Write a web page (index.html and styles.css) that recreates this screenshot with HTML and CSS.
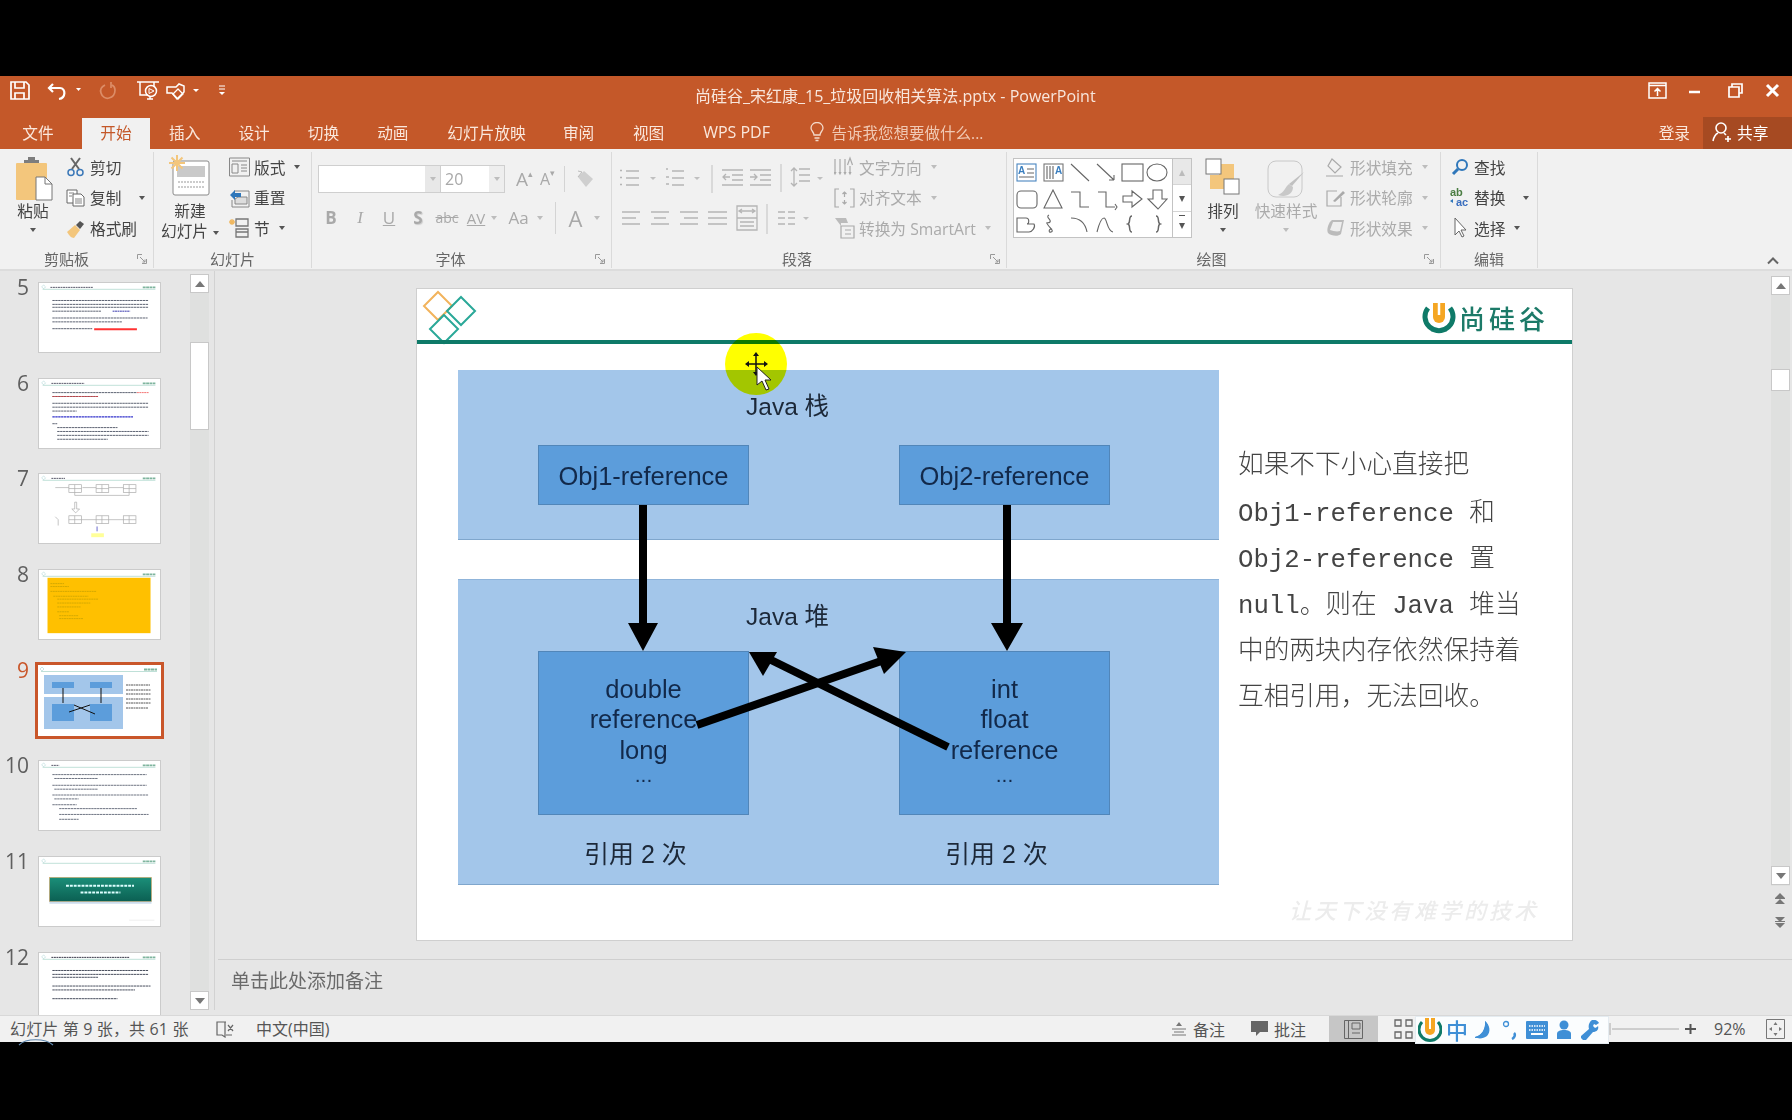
FILE: index.html
```html
<!DOCTYPE html>
<html lang="zh-CN">
<head>
<meta charset="utf-8">
<title>PowerPoint</title>
<link rel="stylesheet" href="styles.css">
</head>
<body>
<svg class="defs" width="0" height="0" aria-hidden="true">
  <symbol id="th-head" viewBox="0 0 123 71">
    <path d="M3 6.5H119" stroke="#bfe0d8" stroke-width="1"/>
    <path d="M4 2l2 2-2 2-2-2z" fill="none" stroke="#9cc" stroke-width=".5"/>
    <path d="M106 4.500H119" stroke="#7fb59e" stroke-width="2" stroke-dasharray="3 .5"/>
  </symbol>
  <symbol id="launcher" viewBox="0 0 10 10">
    <path d="M.5 5V.5H5M9.500 5V9.500H5M3 3l5 5M8 5.500V8H5.500" fill="none" stroke="#999" stroke-width="1"/>
  </symbol>
</svg>
<div class="bar-black-top"></div>
<div class="app">
  <header class="titlebar">
    <div class="qat">
      <svg width="232" height="30" viewBox="0 0 232 30" fill="none" stroke="#fff" stroke-width="1.700">
        <path d="M11 6h15l3 3v14H11zM15 6v6h9V6M15 23v-6h9v6"/>
        <path d="M53 8l-4 4 4 4M49 12h11c6 0 6 10-1 11" stroke-width="2.200"/>
        <path d="M76 12h5l-2.500 3z" fill="#fff" stroke="none"/>
        <path d="M105 9c-4 2-5 5-4 8 1 4 5 6 8 5 4-1 6-4 6-8 0-2-1-4-3-5M111 6v6" stroke="#dc8d67"/>
        <path d="M137 6h22M140 6v13h8M154 6v5M147 23h6M150 20v3" stroke-width="1.500"/>
        <circle cx="151" cy="15" r="5.500" stroke-width="1.500"/><path d="M149 12.500l5 2.500-5 2.500z" stroke-width="1"/>
        <path d="M167 11h9l3-3 5 2v6l-7 7-5-6h-5z" stroke-width="1.500"/><path d="M178 13l5 5-5 5-5-5z" stroke-width="1.300"/>
        <path d="M193 13h6l-3 3z" fill="#fff" stroke="none"/>
        <path d="M219 10h6M219 13h6" stroke-width="1"/><path d="M219 16h6l-3 3z" fill="#fff" stroke="none"/>
      </svg>
    </div>
    <div class="doc-title">尚硅谷_宋红康_15_垃圾回收相关算法.pptx - PowerPoint</div>
    <div class="winctl">
      <svg width="150" height="30" viewBox="0 0 150 30" fill="none" stroke="#fff" stroke-width="1.500">
        <path d="M7 7h17v15H7zM7 9.500h17M15.500 20v-7M12.500 15.500l3-3 3 3"/>
        <path d="M47 16h11" stroke-width="2.500"/>
        <path d="M87 11h10v10H87zM90 11V8h10v9h-3" stroke-width="1.700"/>
        <path d="M125 9l11 11M136 9l-11 11" stroke-width="3"/>
      </svg>
    </div>
  </header>
  <nav class="tabs">
    <span class="tab t-file">文件</span>
    <span class="tab t-home">开始</span>
    <span class="tab t-std">插入</span>
    <span class="tab t-std">设计</span>
    <span class="tab t-std">切换</span>
    <span class="tab t-std">动画</span>
    <span class="tab t-show">幻灯片放映</span>
    <span class="tab t-rev">审阅</span>
    <span class="tab t-view">视图</span>
    <span class="tab t-pdf">WPS PDF</span>
    <span class="tell">
      <svg width="14" height="20" viewBox="0 0 14 20" fill="none" stroke="#f3d9c9" stroke-width="1.300"><path d="M4 13c0-3-3-4-3-7a6 5.500 0 0 1 12 0c0 3-3 4-3 7zM4.500 16h5M5.500 18.500h3"/></svg>
      <span>告诉我您想要做什么...</span>
    </span>
    <span class="login">登录</span>
    <span class="share">
      <svg width="20" height="22" viewBox="0 0 20 22" fill="none" stroke="#fff" stroke-width="1.600"><circle cx="9" cy="7" r="5"/><path d="M1 20c1-5 3-7 5-8M12 12l2 2M13 18h6M16 15v6"/></svg>
      <span>共享</span>
    </span>
  </nav>
  <section class="ribbon">
    <div class="group g-clip">
      <div class="group-body">
        <div class="big b-paste">
          <svg class="big-icon" width="40" height="49" viewBox="0 0 40 49">
            <rect x="3" y="11" width="31" height="37" rx="1" fill="#f3c67c"/>
            <path d="M11 11V8h4V5h7v3h4v3z" fill="#7d7d7d"/>
            <path d="M23 25h9l7 7v16H23z" fill="#fff" stroke="#777"/>
            <path d="M32 25v7h7" fill="none" stroke="#777"/>
          </svg>
          <span class="big-text">粘贴</span>
          <i class="caret caret-big"></i>
        </div>
        <div class="col c-clip">
          <div class="sbtn">
            <svg class="ic" width="20" height="20" viewBox="0 0 20 20" fill="none" stroke="#666" stroke-width="1.500"><path d="M5 1l8 11M14 1L6 12" stroke-width="2"/><circle cx="5" cy="15.500" r="3" stroke="#3b78b8"/><circle cx="14" cy="15.500" r="3" stroke="#3b78b8"/></svg>
            <span>剪切</span>
          </div>
          <div class="sbtn">
            <svg class="ic" width="20" height="20" viewBox="0 0 20 20" fill="#fff" stroke="#666"><path d="M1 2h10v13H1z"/><path d="M7 6h8l3 3v9H7z"/><path d="M3 5h5M3 8h3M9 11h7M9 13h7M9 15h7" stroke-width=".800"/></svg>
            <span>复制</span><i class="caret c-copy"></i>
          </div>
          <div class="sbtn">
            <svg class="ic" width="20" height="20" viewBox="0 0 20 20"><path d="M1 14l8-7 5 5-6 8c-3 0-5-3-7-6z" fill="#f3c67c"/><path d="M10 7l4-4 4 3-4 5z" fill="#555"/></svg>
            <span>格式刷</span>
          </div>
        </div>
      </div>
      <div class="group-label l-clip">剪贴板<svg class="launch" width="10" height="10"><use href="#launcher"/></svg></div>
    </div>

    <div class="group g-slides">
      <div class="group-body">
        <div class="big b-new">
          <svg class="big-icon" width="42" height="49" viewBox="0 0 42 49">
            <rect x="4" y="9" width="36" height="34" rx="2" fill="#fff" stroke="#8a8a8a"/>
            <rect x="8" y="14" width="28" height="11" fill="#c9c9c9"/>
            <path d="M9 30h26M9 35h26" stroke="#999" stroke-dasharray="2 1"/>
            <path d="M8 3v16M0 11h16M2.500 5.500l11 11M13.500 5.500l-11 11" stroke="#f3c67c" stroke-width="2"/>
          </svg>
          <span class="big-text">新建</span>
          <span class="big-text">幻灯片<i class="caret c-inline"></i></span>
        </div>
        <div class="col c-slides">
          <div class="sbtn">
            <svg class="ic" width="21" height="20" viewBox="0 0 21 20" fill="none" stroke="#888"><path d="M.5 1h20v18H.5zM3 4h15M3 7h6v9H3zM12 8h6M12 11h6M12 14h6"/></svg>
            <span>版式</span><i class="caret c-near"></i>
          </div>
          <div class="sbtn">
            <svg class="ic" width="21" height="20" viewBox="0 0 21 20" fill="none" stroke="#888"><path d="M5 3h15v16H3V12"/><path d="M9 9h9v7H6v-5z" fill="#ddd"/><path d="M1 7l5-5v3h6v4H6v3z" fill="#2f77ba" stroke="none"/></svg>
            <span>重置</span>
          </div>
          <div class="sbtn">
            <svg class="ic" width="21" height="20" viewBox="0 0 21 20" fill="none" stroke="#777" stroke-width="1.300"><path d="M7 1h12v7H7zM7 11h12v8H7zM7 14h12"/><path d="M3 1v6M0 4h6M1 2l4 4M5 2L1 6" stroke="#f0b860"/></svg>
            <span>节</span><i class="caret c-near"></i>
          </div>
        </div>
      </div>
      <div class="group-label">幻灯片</div>
    </div>

    <div class="group g-font">
      <div class="group-body font-body">
        <div class="font-row">
          <div class="combo cb-name"><span class="cb-arrow"><i class="caret caret-dis"></i></span></div>
          <div class="combo cb-size"><span class="cb-value">20</span><span class="cb-arrow cb-arrow-s"><i class="caret caret-dis"></i></span></div>
          <span class="ftool ft-a1">A<sup>▴</sup></span>
          <span class="ftool ft-a2">A<sup>▾</sup></span>
          <span class="vsep vs-f1"></span>
          <svg class="eraser" width="20" height="20" viewBox="0 0 20 20"><path d="M3 8l6-6 9 8-7 8z" fill="#cfcfcf"/><path d="M3 2l4 1-4 5" fill="none" stroke="#bbb"/></svg>
        </div>
        <div class="font-row font-row2">
          <span class="fcell fb">B</span>
          <span class="fcell fi">I</span>
          <span class="fcell fu">U</span>
          <span class="fcell fs">S</span>
          <span class="fcell fabc">abc</span>
          <span class="fcell fav">AV</span>
          <i class="caret caret-dis c-av"></i>
          <span class="fcell faa">Aa</span>
          <i class="caret caret-dis c-aa"></i>
          <span class="vsep vs-f2"></span>
          <span class="fcell fa">A</span>
          <i class="caret caret-dis c-a"></i>
        </div>
      </div>
      <div class="group-label l-font">字体<svg class="launch" width="10" height="10"><use href="#launcher"/></svg></div>
    </div>

    <div class="group g-para">
      <div class="group-body">
        <div class="para-icons">
          <svg width="220" height="93" viewBox="0 0 220 93" fill="none" stroke="#b5b5b5" stroke-width="1.300">
            <path d="M14 19h13M14 26h13M14 33h13M8 18.500h2M8 25.500h2M8 32.500h2" />
            <path d="M38 25h6l-3 3z" fill="#c0c0c0" stroke="none"/>
            <path d="M60 19h12M60 26h12M60 33h12M54 17h2M54 25h3M54 32h3"/>
            <path d="M82 25h6l-3 3z" fill="#c0c0c0" stroke="none"/>
            <path d="M100 13v28M169 13" stroke="#ccc"/>
            <path d="M110 18h21M120 23h11M120 28h11M110 33h21M111 25h7M114 22l-3 3 3 3"/>
            <path d="M138 18h21M148 23h11M148 28h11M138 33h21M138 25h7M142 22l3 3-3 3"/>
            <path d="M169 12v28" stroke="#ccc"/>
            <path d="M187 17h11M187 23h11M187 29h11M182 16v18M179 19l3-3 3 3M179 31l3 3 3-3"/>
            <path d="M205 25h6l-3 3z" fill="#c0c0c0" stroke="none"/>
            <path d="M10 60h18M10 66h14M10 72h18M39 60h18M42 66h12M39 72h18M68 60h18M72 66h14M68 72h18M96 60h19M96 66h19M96 72h19"/>
            <path d="M125 54h20v24h-20zM125 66h20M128 59h14M130 57l-3 2 3 2M140 57l3 2-3 2M128 70h14M128 74h14"/>
            <path d="M155 52v30" stroke="#ccc"/>
            <path d="M166 60h7M166 66h7M166 72h7M176 60h7M176 66h7M176 72h7"/>
            <path d="M191 65h6l-3 3z" fill="#c0c0c0" stroke="none"/>
          </svg>
        </div>
        <div class="col c-para">
          <div class="sbtn dis">
            <svg class="ic" width="21" height="22" viewBox="0 0 21 22" fill="none" stroke="#aaa" stroke-width="1.200"><path d="M1 3v15M6 3v15M11 3v15M16 10v8M0 16l1 2 1-2M5 16l1 2 1-2M10 16l1 2 1-2M15 16l1 2 1-2M13.500 9l2.500-7 2.500 7"/></svg>
            <span>文字方向</span><i class="caret caret-dis c-near"></i>
          </div>
          <div class="sbtn dis">
            <svg class="ic" width="21" height="22" viewBox="0 0 21 22" fill="none" stroke="#aaa" stroke-width="1.200"><path d="M5 2H1v18h4M16 2h4v18h-4M10.500 5v5M8.500 7l2-2 2 2M10.500 17v-4M8.500 15l2 2 2-2"/></svg>
            <span>对齐文本</span><i class="caret caret-dis c-near"></i>
          </div>
          <div class="sbtn dis">
            <svg class="ic" width="21" height="22" viewBox="0 0 21 22" fill="none" stroke="#aaa" stroke-width="1.200"><path d="M7 9h13v12H7zM11 13h6M11 17h6"/><path d="M1 1h11l2 5H7v3z" fill="#bbb" stroke="none"/></svg>
            <span>转换为 SmartArt</span><i class="caret caret-dis c-near"></i>
          </div>
        </div>
      </div>
      <div class="group-label l-para">段落<svg class="launch" width="10" height="10"><use href="#launcher"/></svg></div>
    </div>

    <div class="group g-draw">
      <div class="group-body">
        <div class="gallery">
          <svg width="160" height="80" viewBox="0 0 160 80" fill="none" stroke="#666" stroke-width="1.100">
            <rect x="4" y="6" width="19" height="17" stroke="#4a86c0"/><text x="5" y="16" class="ga">A</text><path d="M14 11h7M14 15h7M6 19h15"/>
            <rect x="31" y="6" width="19" height="17" stroke="#777"/><path d="M34 8v13M37 8v13M40 8v13"/><text x="42" y="16" class="ga">A</text>
            <path d="M58 6l18 17M84 6l17 16M101 22v-5M101 22h-5"/>
            <rect x="109" y="6" width="21" height="17"/>
            <ellipse cx="144" cy="14.500" rx="10" ry="8.500"/>
            <rect x="4" y="33" width="20" height="17" rx="4"/>
            <path d="M40 32l9 18H31zM58 34h9v15h9M85 34h8v15h9M102 46l2 3-2 3"/>
            <path d="M110 38h9v-5l10 8-10 8v-5h-9zM140 32h9v9h5l-9 10-10-10h5z"/>
            <path d="M4 74V60h9c4 0 3 6 1 6h7c2 3-2 8-5 8z"/>
            <path d="M36 57c-4 2 3 5 1 7s-5-1-2 3 6 6 3 7-2-4 1-3" />
            <path d="M58 60c9 0 14 4 16 14M84 74c2-8 4-14 7-14s3 13 9 14"/>
            <path d="M119 58c-4 0-1 7-4 8 3 1 0 8 4 8M143 58c4 0 1 7 4 8-3 1 0 8-4 8" stroke-width="1.500"/>
          </svg>
        </div>
        <div class="gal-scroll">
          <span class="gs gs-up">▴</span>
          <span class="gs gs-mid">▾</span>
          <span class="gs gs-more">▾</span>
        </div>
        <div class="big b-arr">
          <svg class="big-icon" width="38" height="49" viewBox="0 0 38 49">
            <rect x="15" y="12" width="15" height="15" fill="#f3c67c"/>
            <rect x="6" y="23" width="14" height="14" fill="#f3c67c"/>
            <rect x="2" y="7" width="15" height="15" fill="#fff" stroke="#777"/>
            <rect x="20" y="27" width="15" height="15" fill="#fff" stroke="#777"/>
          </svg>
          <span class="big-text">排列</span>
          <i class="caret caret-big"></i>
        </div>
        <div class="big b-quick dis">
          <svg class="big-icon" width="40" height="49" viewBox="0 0 40 49">
            <rect x="2" y="9" width="34" height="36" rx="8" fill="#f1f1f1" stroke="#c8c8c8"/>
            <path d="M38 20L26 34l-3-2z" fill="#c0c0c0"/><path d="M23 32c-4 3-4 8-11 11 8 3 15-1 15-8z" fill="#c8c8c8"/>
          </svg>
          <span class="big-text">快速样式</span>
          <i class="caret caret-dis caret-big"></i>
        </div>
        <div class="col c-shape">
          <div class="sbtn dis">
            <svg class="ic" width="20" height="20" viewBox="0 0 20 20" fill="none" stroke="#aaa" stroke-width="1.200"><path d="M6 2l9 8-6 6-7-7z"/><path d="M0 19h17" stroke="#ccc" stroke-width="2"/></svg>
            <span>形状填充</span><i class="caret caret-dis c-near"></i>
          </div>
          <div class="sbtn dis">
            <svg class="ic" width="20" height="20" viewBox="0 0 20 20" fill="none" stroke="#aaa" stroke-width="1.200"><path d="M11 3H1v15h14V9"/><path d="M7 13l10-10 2 2-10 9z" fill="#aaa" stroke="none"/></svg>
            <span>形状轮廓</span><i class="caret caret-dis c-near"></i>
          </div>
          <div class="sbtn dis">
            <svg class="ic" width="20" height="20" viewBox="0 0 20 20"><path d="M6 2h12l-3 14c-3 3-10 2-13-1-2-4 1-11 4-13z" fill="#bbb"/><path d="M7 4h9l-2 9c-3 1-7 0-10-1z" fill="#eee"/></svg>
            <span>形状效果</span><i class="caret caret-dis c-near"></i>
          </div>
        </div>
      </div>
      <div class="group-label l-draw">绘图<svg class="launch" width="10" height="10"><use href="#launcher"/></svg></div>
    </div>

    <div class="group g-edit">
      <div class="group-body">
        <div class="col c-edit">
          <div class="sbtn">
            <svg class="ic" width="20" height="20" viewBox="0 0 20 20" fill="none" stroke="#2f77ba" stroke-width="2"><circle cx="12" cy="8" r="5"/><path d="M8 12l-5 5" stroke-width="3"/></svg>
            <span>查找</span>
          </div>
          <div class="sbtn">
            <svg class="ic" width="20" height="24" viewBox="0 0 20 24"><text x="0" y="10" class="rep rep-a">ab</text><text x="6" y="20" class="rep rep-b">ac</text><path d="M0 15l3-2v4zM3 15h2" fill="#2f77ba"/></svg>
            <span>替换</span><i class="caret c-rep"></i>
          </div>
          <div class="sbtn">
            <svg class="ic" width="20" height="22" viewBox="0 0 20 22" fill="#fff" stroke="#666"><path d="M5 1v17l4-4 3 6 2-1-3-6h5z"/></svg>
            <span>选择</span><i class="caret c-near"></i>
          </div>
        </div>
      </div>
      <div class="group-label">编辑</div>
    </div>

    <div class="ribbon-rest">
      <svg width="14" height="9" viewBox="0 0 14 9" fill="none" stroke="#666" stroke-width="2"><path d="M2 7.500l5-5 5 5"/></svg>
    </div>
  </section>

  <main class="main">
    <aside class="sidebar">
      <div class="thumbs">
        <div class="thumb-item"><span class="num">5</span><div class="thumb">
          <svg viewBox="0 0 123 71"><use href="#th-head"/><path d="M11 4.500H55" stroke="#556" stroke-dasharray="2 .6"/>
          <g stroke="#5a6070" stroke-width="1" stroke-dasharray="2.500 .5"><path d="M13 18H112M13 22H112M13 25H112M13 29H63M13 36H111M13 40H85M13 47H54"/></g>
          <path d="M75 29H93" stroke="#33a" stroke-dasharray="2 .5"/><path d="M56 47.500H100" stroke="#f33" stroke-width="2"/></svg></div></div>
        <div class="thumb-item"><span class="num">6</span><div class="thumb">
          <svg viewBox="0 0 123 71"><use href="#th-head"/><path d="M12 4.500H46" stroke="#556" stroke-dasharray="2 .6"/>
          <g stroke="#5a6070" stroke-width="1" stroke-dasharray="2.500 .5"><path d="M13 14H100M13 18H60M13 25H112M13 29H112M13 33H38M13 46H18M18 50H80M18 54H112M18 58H112M18 62H70"/></g>
          <path d="M100 14H112M13 18H60" stroke="#e33" stroke-dasharray="2 .5" opacity=".7"/><path d="M13 39H96" stroke="#33c" stroke-width="1.300" stroke-dasharray="2.500 .5"/></svg></div></div>
        <div class="thumb-item"><span class="num">7</span><div class="thumb">
          <svg viewBox="0 0 123 71"><use href="#th-head"/><path d="M12 4.500H26" stroke="#556" stroke-dasharray="2 .6"/>
          <g fill="none" stroke="#aaa" stroke-width=".700"><path d="M16 14H30M44 14H58M71 14H86"/><rect x="30" y="11" width="13" height="8"/><rect x="58" y="11" width="13" height="8"/><rect x="86" y="11" width="13" height="8"/><path d="M36 11v8M64 11v8M92 11v8M30 15h13M58 15h13M86 15h13M92 19v3H36v-3"/><path d="M36 29v7h-3l4 4 4-4h-3v-7z"/><rect x="30" y="43" width="13" height="8"/><rect x="58" y="43" width="13" height="8"/><rect x="86" y="43" width="13" height="8"/><path d="M36 43v8M64 43v8M92 43v8M30 47h13M58 47h13M86 47h13M43 47h15M71 47h15M16 44l3 3v6"/></g>
          <rect x="53" y="61" width="13" height="4" fill="#ffff99"/><path d="M59 54v5" stroke="#66c"/></svg></div></div>
        <div class="thumb-item"><span class="num">8</span><div class="thumb">
          <svg viewBox="0 0 123 71"><use href="#th-head"/><rect x="8" y="8" width="106" height="57" fill="#ffc000"/>
          <g stroke="#c7a200" stroke-width=".800" stroke-dasharray="2 .5"><path d="M11 14H25M11 17H30M11 22H58M14 27H50M18 30H60M18 34H52M18 38H42M18 43H30M20 47H40M20 50H45"/></g></svg></div></div>
        <div class="thumb-item"><span class="num num-on">9</span><div class="thumb thumb-on">
          <svg viewBox="0 0 123 71"><use href="#th-head"/><rect x="6" y="10" width="79" height="19" fill="#a3c6ea"/><rect x="6" y="32" width="79" height="32" fill="#a3c6ea"/>
          <rect x="14" y="17" width="22" height="6" fill="#5c9ddb"/><rect x="52" y="17" width="22" height="6" fill="#5c9ddb"/><rect x="14" y="39" width="22" height="17" fill="#5c9ddb"/><rect x="52" y="39" width="22" height="17" fill="#5c9ddb"/>
          <path d="M25 23V38M63 23V38M31 47L52 40M57 49L36 40" stroke="#111" stroke-width="1"/>
          <g stroke="#444" stroke-width=".900" stroke-dasharray="2 .5"><path d="M88 20H112M88 25H113M88 29H113M88 34H113M88 38H113M88 43H110"/></g></svg></div></div>
        <div class="thumb-item"><span class="num">10</span><div class="thumb">
          <svg viewBox="0 0 123 71"><use href="#th-head"/><path d="M12 4.500H20" stroke="#556" stroke-dasharray="2 .6"/>
          <g stroke="#5a6070" stroke-width=".900" stroke-dasharray="2.500 .5"><path d="M13 14H110M15 18H60M13 25H110M15 29H60M13 35H112M15 39H40M13 45H38M20 49H100M20 55H112M20 60H40"/></g></svg></div></div>
        <div class="thumb-item"><span class="num">11</span><div class="thumb">
          <svg viewBox="0 0 123 71"><defs><linearGradient id="tg" x1="0" y1="0" x2="0" y2="1"><stop offset="0" stop-color="#1b8f79"/><stop offset="1" stop-color="#0b5f52"/></linearGradient></defs><use href="#th-head"/><rect x="10" y="21" width="105" height="25" fill="url(#tg)" stroke="#e8a050" stroke-width=".500"/>
          <path d="M27 29.500H97M42 36.500H83" stroke="#dff" stroke-width="2" stroke-dasharray="3 1"/><path d="M10 47H115" stroke="#cde" stroke-width="2"/><path d="M92 65H118" stroke="#eee"/></svg></div></div>
        <div class="thumb-item"><span class="num">12</span><div class="thumb">
          <svg viewBox="0 0 123 71"><use href="#th-head"/><path d="M12 4.500H92" stroke="#334" stroke-dasharray="2 .6"/>
          <g stroke="#444a5a" stroke-width="1" stroke-dasharray="2.500 .5"><path d="M13 18H112M13 22H112M13 25H60M13 34H114M13 38H98M13 47H80"/></g></svg></div></div>
      </div>
      <div class="vscroll vs-left">
        <span class="sb-btn"><i class="tri-up"></i></span>
        <span class="sb-thumb"></span>
        <span class="sb-btn sb-end"><i class="tri-down"></i></span>
      </div>
    </aside>

    <div class="editor">
      <div class="editor-top">
        <div class="canvas">
          <div class="slide">
            <svg class="sl-diamonds" width="60" height="56" viewBox="0 0 60 56" fill="none" stroke-width="2">
              <path d="M21 2l14 14-14 14L7 16z" stroke="#f2b35c"/>
              <path d="M44 7l14 14-14 14-14-14z" stroke="#2aa898"/>
              <path d="M27 25l14 14-14 14-14-14z" stroke="#2aa898"/>
            </svg>
            <div class="sl-logo">
              <svg width="34" height="32" viewBox="0 0 34 32">
                <path d="M6 6a14 14 0 1 0 22 0" fill="none" stroke="#0f7a68" stroke-width="5"/>
                <path d="M11 1h12v14a6 6 0 0 1-12 0z" fill="#f5a623"/>
                <path d="M17 0v13" stroke="#fff" stroke-width="2.500"/>
              </svg>
              <span class="sl-logo-text">尚硅谷</span>
            </div>
            <div class="sl-rule"></div>
            <div class="sl-area sl-stack"><span class="sl-head">Java 栈</span></div>
            <div class="sl-area sl-heap"><span class="sl-head sl-head-h">Java 堆</span></div>
            <div class="sl-box sl-ref1">Obj1-reference</div>
            <div class="sl-box sl-ref2">Obj2-reference</div>
            <div class="sl-box sl-obj1">double<br>reference<br>long<span class="sl-dots">...</span></div>
            <div class="sl-box sl-obj2">int<br>float<br>reference<span class="sl-dots">...</span></div>
            <span class="sl-count sl-c1">引用 2 次</span>
            <span class="sl-count sl-c2">引用 2 次</span>
            <svg class="sl-arrows" width="1155" height="651" viewBox="0 0 1155 651">
              <g fill="#000" stroke="none">
                <path d="M222 216h8v118h11l-15 28-15-28h11z"/>
                <path d="M586 216h8v118h12l-16 28-16-28h12z"/>
              </g>
              <path d="M280 436L470 370" stroke="#000" stroke-width="8" fill="none"/>
              <path d="M489 363l-33-5 11 27z" fill="#000"/>
              <path d="M531 458L352 370" stroke="#000" stroke-width="8" fill="none" />
              <path d="M332 363h28l-14 24z" fill="#000"/>
            </svg>
            <div class="sl-text">
              <div class="sl-first">如果不下小心直接把</div>
              <div>Obj1-reference 和</div>
              <div>Obj2-reference 置</div>
              <div>null。则在 Java 堆当</div>
              <div>中的两块内存依然保持着</div>
              <div>互相引用，无法回收。</div>
            </div>
            <div class="sl-mark">让天下没有难学的技术</div>
            <div class="cursor-spot"></div>
            <svg class="cursor" width="30" height="42" viewBox="0 0 30 42">
              <path d="M10 12V3M10 12V21M10 12H1M10 12H20" stroke="#111" stroke-width="1.500"/>
              <path d="M10 0l-3 4h6zM10 24l-3-4h6zM-1 12l4-3v6zM22 12l-4-3v6z" fill="#111"/>
              <path d="M11 15v18l5-4 4 9 3-1-4-9h6z" fill="#fff" stroke="#222" stroke-width="1"/>
            </svg>
          </div>
        </div>
        <div class="vscroll vs-right">
          <span class="sb-btn"><i class="tri-up"></i></span>
          <span class="sb-thumb sb-thumb-r"></span>
          <span class="sb-btn sb-end-r"><i class="tri-down"></i></span>
          <svg class="sb-page" width="14" height="36" viewBox="0 0 14 36" fill="#777"><path d="M7 0l5 5H2zM7 6l5 5H2z"/><path d="M2 5.500h10M2 28.500h10" stroke="#777"/><path d="M7 29l5-5H2zM7 35l5-5H2z"/></svg>
        </div>
      </div>
      <div class="notes">单击此处添加备注</div>
    </div>
  </main>

  <footer class="status">
    <svg class="status-arc" width="36" height="8" viewBox="0 0 36 8" fill="none" stroke="#5d86ad" stroke-width="1.200"><path d="M1 7C8 0 27 0 35 7"/></svg>
    <span class="st-count">幻灯片 第 9 张，共 61 张</span>
    <svg class="st-spell" width="19" height="18" viewBox="0 0 19 18" fill="none" stroke="#666" stroke-width="1.200"><path d="M10 2H2v13h5l3 2V2zM10 2h1M13 5l5 6M18 5l-5 6M11 15h6"/></svg>
    <span class="st-lang">中文(中国)</span>
    <div class="st-right">
      <span class="st-btn st-notes">
        <svg width="16" height="17" viewBox="0 0 16 17" fill="none" stroke="#777"><path d="M1 9h14M3 12h10M1 15h14"/><path d="M5 6l3-4 3 4z" fill="#777" stroke="none"/></svg>
        备注
      </span>
      <span class="st-btn st-comments">
        <svg width="17" height="17" viewBox="0 0 17 17"><path d="M0 1h17v11H9l-4 4v-4H0z" fill="#666"/></svg>
        批注
      </span>
      <span class="st-view">
        <svg width="19" height="19" viewBox="0 0 19 19" fill="none" stroke="#666"><path d="M.5.5h18v18H.5zM4.500.5v18M8 3h8v6H8zM8 13h8"/></svg>
      </span>
      <span class="st-grid">
        <svg width="19" height="20" viewBox="0 0 19 20" fill="none" stroke="#666" stroke-width="1.300"><path d="M1 1h6v6H1zM12 1h6v6h-6zM1 13h6v6H1zM12 13h6v6h-6z"/></svg>
      </span>
      <span class="st-zoom-gap"></span>
      <svg class="st-slider" width="88" height="16" viewBox="0 0 88 16" fill="none" stroke="#777"><path d="M1 2v12M3 8H70" stroke="#aaa"/><path d="M76 8h11M81.500 3v10" stroke="#555" stroke-width="2"/></svg>
      <span class="st-pct">92%</span>
      <svg class="st-fit" width="19" height="20" viewBox="0 0 19 20" fill="none" stroke="#777"><path d="M.5.5h18v19H.5z"/><path d="M9.500 3l-2 3h4zM9.500 17l-2-3h4zM3 10l3-2v4zM16 10l-3-2v4z" fill="#777" stroke="none"/></svg>
    </div>
    <div class="ime">
      <svg width="24" height="26" viewBox="0 0 24 26">
        <path d="M4 5a11 11 0 1 0 16 0" fill="none" stroke="#0f7a68" stroke-width="3"/>
        <path d="M7 1h10v12a5 5 0 0 1-10 0z" fill="#f5a623"/>
        <path d="M12 0v12" stroke="#fff" stroke-width="2"/>
      </svg>
      <span class="ime-zh">中</span>
      <svg width="18" height="18" viewBox="0 0 18 18"><path d="M10 0c6 5 5 17-9 17-1 0-1 0-1-1 6-1 11-8 10-16z" fill="#3f8fd6"/><path d="M10 0c5 4 6 11 2 15-4 3-9 3-12 1 7-1 11-8 10-16z" fill="#3f8fd6"/></svg>
      <svg width="16" height="20" viewBox="0 0 16 20" fill="none" stroke="#3f8fd6" stroke-width="1.300"><circle cx="4" cy="4" r="2.500"/><path d="M12 13c2 2 0 5-2 6" stroke-width="2.500"/></svg>
      <svg width="22" height="18" viewBox="0 0 22 18"><rect width="22" height="18" rx="1" fill="#3f8fd6"/><path d="M3 5h16M3 9h16" stroke="#fff" stroke-width="1.500" stroke-dasharray="1.500 1"/><path d="M5 13h12" stroke="#fff" stroke-width="2"/></svg>
      <svg width="14" height="20" viewBox="0 0 14 20" fill="#3f8fd6"><circle cx="7" cy="5" r="4.500"/><path d="M0 19v-5c0-3 3-4 7-4s7 1 7 4v5z"/></svg>
      <svg width="18" height="20" viewBox="0 0 18 20" fill="#3f8fd6"><path d="M11 0c3-1 6 1 7 3l-3 2-2-1-1 2 2 2 2-1 1-1c1 3-1 6-5 6l-7 8H2l-2-2v-2l8-7c-1-3 0-7 3-9z"/></svg>
    </div>
  </footer>
</div>
<div class="bar-black-bottom"></div>
</body>
</html>
```

FILE: styles.css
```css
* { box-sizing: border-box; }
html, body { margin: 0; padding: 0; }
body {
  width: 1792px;
  height: 1120px;
  overflow: hidden;
  background: #000;
  display: flex;
  flex-direction: column;
  font-family: "Open Sans", "Noto Sans CJK SC", sans-serif;
  color: #444;
}
i { font-style: normal; }
.defs { position: absolute; }
.bar-black-top { height: 76px; flex: none; }
.bar-black-bottom { flex: 1; }
.app { height: 966px; flex: none; display: flex; flex-direction: column; filter: blur(.45px); }

/* title bar */
.titlebar { height: 41px; background: #c45829; display: flex; align-items: flex-start; color: #fff; flex: none; }
.qat { width: 695px; }
.qat svg, .winctl svg { display: block; }
.doc-title { font-size: 16px; line-height: 40px; color: #f8e6dc; white-space: nowrap; }
.winctl { margin-left: auto; padding-top: 0; }

/* tabs */
.tabs { height: 32px; background: #c45829; display: flex; align-items: stretch; padding-left: 8px; flex: none; color: #fae7dc; font-size: 15.7px; }
.tab { display: flex; align-items: center; justify-content: center; white-space: nowrap; padding-bottom: 2px; }
.t-file { width: 60px; margin-right: 14px; }
.t-home { width: 68px; background: #f1f1f1; color: #c45829; margin-top: 1px; }
.t-std { width: 69.4px; }
.t-show { width: 118px; }
.t-rev { width: 66px; }
.t-view { width: 74px; }
.t-pdf { width: 102px; font-size: 16px; }
.tell { display: flex; align-items: center; gap: 8px; margin-left: 22px; color: #f0c9b4; font-size: 15.5px; padding-bottom: 2px; }
.login { margin-left: auto; display: flex; align-items: center; margin-right: 13px; padding-bottom: 2px; }
.share { width: 89px; background: #a64a22; display: flex; align-items: center; gap: 5px; padding-left: 9px; color: #fff; padding-bottom: 2px; }

/* ribbon */
.ribbon { height: 122px; background: #f1f1f1; border-bottom: 2px solid #dcdcdc; display: flex; align-items: stretch; padding: 3px 0 2px; flex: none; font-size: 15.7px; }
.group { display: flex; flex-direction: column; border-right: 1px solid #dadada; flex: none; height: 116px; }
.g-clip { width: 154px; }
.g-slides { width: 158px; }
.g-font { width: 300px; }
.g-para { width: 395px; }
.g-draw { width: 434px; }
.g-edit { width: 97px; }
.ribbon-rest { flex: 1; display: flex; align-items: flex-end; justify-content: flex-end; padding: 0 12px 3px 0; height: 116px; }
.group-body { height: 93px; display: flex; flex: none; }
.group-label { position: relative; height: 23px; line-height: 28px; text-align: center; color: #666; font-size: 15px; }
.launch { position: absolute; right: 6px; top: 9px; }
.l-clip { padding-right: 20px; }
.l-font { padding-right: 22px; }
.l-para { padding-right: 24px; }
.l-draw { padding-right: 24px; }

.big { display: flex; flex-direction: column; align-items: center; flex: none; white-space: nowrap; }
.big-icon { display: block; height: 49px; flex: none; }
.big-text { line-height: 20px; height: 20px; display: block; }
.b-paste { width: 66px; }
.b-new { width: 72px; }
.b-arr { width: 62px; }
.b-quick { width: 64px; }
.dis { color: #ababab; }

.col { display: flex; flex-direction: column; flex: none; }
.c-slides { padding-left: 3px; }
.c-para { padding-left: 0; }
.c-shape { padding-left: 8px; }
.c-edit { padding-left: 9px; }
.sbtn { height: 30.500px; display: flex; align-items: center; gap: 4px; white-space: nowrap; }
.sbtn .ic { flex: none; }
.c-clip .sbtn { gap: 4px; }

.caret { display: inline-block; width: 0; height: 0; border: 3.500px solid transparent; border-top: 4px solid #555; border-bottom: 0; flex: none; }
.caret-dis { border-top-color: #bdbdbd; }
.caret-big { margin-top: 7px; }
.c-copy { margin-left: 14px; }
.c-near { margin-left: 5px; }
.c-rep { margin-left: 14px; }
.c-inline { margin-left: 5px; vertical-align: middle; }

/* font group */
.font-body { flex-direction: column; padding: 13px 0 0 6px; }
.font-row { display: flex; align-items: center; height: 28px; }
.font-row2 { margin-top: 11px; margin-left: -1.500px; }
.combo { height: 28px; background: #fff; border: 1px solid #cfcfcf; display: flex; align-items: center; justify-content: flex-end; }
.cb-name { width: 123px; }
.cb-size { width: 64px; justify-content: space-between; border-left: 0; }
.cb-value { color: #a8a8a8; font-size: 16px; padding-left: 4px; }
.cb-arrow { width: 15px; height: 26px; background: #e8e8e8; display: flex; align-items: center; justify-content: center; }
.cb-arrow-s { background: #eee; }
.ftool { color: #a9a9a9; font-size: 19px; line-height: 28px; }
.ftool sup { font-size: 9px; vertical-align: 9px; line-height: 0; }
.ft-a1 { margin-left: 11px; }
.ft-a2 { margin-left: 7px; font-size: 16px; }
.vsep { width: 1px; height: 26px; background: #d4d4d4; display: block; flex: none; }
.vs-f1 { margin-left: 9px; }
.eraser { margin-left: 10px; }
.vs-f2 { margin-left: 12px; height: 32px; }
.fcell { width: 29px; text-align: center; color: #a9a9a9; font-size: 17px; line-height: 28px; flex: none; }
.fb { font-weight: 700; }
.fi { font-style: italic; font-family: "Liberation Serif", serif; }
.fu { text-decoration: underline; }
.fs { font-weight: 700; text-shadow: 1px 1px 1px #ccc; }
.fabc { font-size: 14px; text-decoration: line-through; }
.fav { font-size: 15px; text-decoration: underline; }
.c-av { margin-left: 0; }
.faa { width: 32px; margin-left: 6px; font-size: 17px; }
.c-aa { margin-left: 2px; }
.fa { width: 24px; margin-left: 8px; font-size: 22px; }
.c-a { margin-left: 6px; }

/* paragraph */
.para-icons { width: 222px; flex: none; }
.para-icons svg { display: block; }

/* drawing */
.gallery { width: 160px; height: 80px; margin: 6px 0 0 6px; background: #fff; border: 1px solid #c3c3c3; flex: none; overflow: hidden; }
.gallery svg { display: block; margin: -1px; }
.ga { font: 700 10px "Liberation Sans", sans-serif; fill: #3b7fbf; stroke: none; }
.gal-scroll { width: 19px; height: 80px; margin-top: 6px; display: flex; flex-direction: column; flex: none; border: 1px solid #c3c3c3; border-left: 0; }
.gs { flex: 1; display: flex; align-items: center; justify-content: center; font-size: 12px; color: #555; background: #fff; border-bottom: 1px solid #d5d5d5; }
.gs-up { background: #e8e8e8; color: #bbb; }
.gs-more { border-bottom: 0; text-decoration: overline; }

.rep { font: 700 11px "Liberation Sans", sans-serif; }
.rep-a { fill: #4b7d43; }
.rep-b { fill: #3b6fbf; }

/* main */
.main { height: 744px; background: #e6e6e6; display: flex; flex: none; }
.sidebar { width: 215px; height: 739px; display: flex; border-right: 1px solid #d2d2d2; flex: none; }
.thumbs { width: 190px; height: 744px; overflow: hidden; padding-top: 11px; display: flex; flex-direction: column; gap: 24.700px; flex: none; }
.thumb-item { display: flex; flex: none; height: 71px; }
.num { width: 29px; text-align: right; font-size: 21px; line-height: 10px; color: #5f5f5f; flex: none; }
.num-on { color: #c9562a; }
.thumb { width: 123px; height: 71px; margin-left: 9px; background: #fff; border: 1px solid #cbcbcb; flex: none; }
.thumb svg { display: block; width: 100%; height: 100%; }
.thumb-on { outline: 3px solid #c9562a; border: 0; }

.vscroll { display: flex; flex-direction: column; align-items: stretch; background: #dfe0df; flex: none; }
.vs-left { width: 19px; margin-top: 3px; height: 736px; margin-left: 0; }
.sb-btn { height: 19px; background: #fff; border: 1px solid #c8c8c8; display: flex; align-items: center; justify-content: center; flex: none; }
.sb-thumb { width: 100%; height: 88px; margin-top: 49px; background: #fff; border: 1px solid #c8c8c8; flex: none; }
.sb-end { margin-top: auto; }
.tri-up { width: 0; height: 0; border: 5px solid transparent; border-bottom: 6px solid #777; border-top: 0; }
.tri-down { width: 0; height: 0; border: 5px solid transparent; border-top: 6px solid #777; border-bottom: 0; }

.editor { flex: 1; display: flex; flex-direction: column; min-width: 0; }
.editor-top { height: 688px; display: flex; flex: none; }
.canvas { flex: 1; padding: 18px 0 0 202px; }
.vs-right { width: 19px; margin: 5px 2px 0 0; height: 656px; position: relative; background: linear-gradient(#dfe0df 610px, #e6e6e6 610px); }
.sb-thumb-r { height: 22px; margin-top: 74px; }
.sb-end-r { margin-top: 475px; }
.sb-page { margin: 8px 0 0 2px; display: block; flex: none; }

.notes { flex: 1; border-top: 1px solid #cfcfcf; margin-left: 3px; padding: 10px 0 0 13px; font-size: 19px; line-height: 22px; color: #6a6a6a; }

/* slide */
.slide { position: relative; width: 1155px; height: 651px; background: #fff; box-shadow: 0 0 0 1px #cfcfcf; overflow: hidden; font-family: "Liberation Sans", "Noto Sans CJK SC", sans-serif; }
.sl-diamonds { position: absolute; left: 0; top: 1px; }
.sl-logo { position: absolute; left: 1005px; top: 13px; display: flex; align-items: center; gap: 3px; }
.sl-logo svg { display: block; }
.sl-logo-text { font-size: 26px; line-height: 30px; font-weight: 500; color: #1c7a68; letter-spacing: 4px; font-family: "Noto Sans CJK SC", sans-serif; }
.sl-rule { position: absolute; left: 0; right: 0; top: 51px; height: 4px; background: #0e7a68; }
.sl-area { position: absolute; left: 41px; width: 761px; background: #a3c6ea; border-bottom: 1px solid #7fa6cc; }
.sl-stack { top: 81px; height: 170px; }
.sl-heap { top: 290px; height: 306px; border-top: 1px solid #8fb4da; }
.sl-head { position: absolute; left: 288px; top: 21px; font-size: 24.500px; line-height: 32px; color: #1c2838; white-space: nowrap; }
.sl-head-h { top: 21px; }
.sl-box { position: absolute; background: #5c9ddb; border: 1px solid #5186b9; color: #12294a; font-size: 25.500px; text-align: center; }
.sl-ref1, .sl-ref2 { top: 156px; width: 211px; height: 60px; line-height: 61px; }
.sl-ref1 { left: 121px; }
.sl-ref2 { left: 482px; }
.sl-obj1, .sl-obj2 { top: 362px; width: 211px; height: 164px; padding-top: 22px; line-height: 30.300px; }
.sl-obj1 { left: 121px; }
.sl-obj2 { left: 482px; }
.sl-dots { display: block; font-size: 21px; line-height: 26px; margin-top: -3px; }
.sl-count { position: absolute; top: 550px; font-size: 25px; line-height: 30px; color: #1c2838; white-space: nowrap; }
.sl-c1 { left: 167px; }
.sl-c2 { left: 528px; }
.sl-arrows { position: absolute; left: 0; top: 0; }
.sl-text { position: absolute; left: 821px; top: 156px; width: 320px; font-family: "Liberation Mono", "Noto Sans CJK SC", monospace; font-size: 25.700px; line-height: 46px; color: #444; white-space: nowrap; font-weight: 300; }
.sl-first { margin-bottom: 2px; margin-top: -1px; }
.sl-mark { position: absolute; left: 872px; top: 607px; font-size: 22px; line-height: 26px; font-style: italic; letter-spacing: 3px; color: #ececec; font-weight: 500; white-space: nowrap; font-family: "Noto Sans CJK SC", sans-serif; }
.cursor-spot { position: absolute; left: 308px; top: 44px; width: 62px; height: 62px; border-radius: 50%; background: #ffff00; mix-blend-mode: multiply; }
.cursor { position: absolute; left: 329px; top: 63px; overflow: visible; }

/* status */
.status { height: 27px; background: #f1f1f1; border-top: 1px solid #d8d8d8; display: flex; align-items: center; font-size: 16px; color: #555; position: relative; flex: none; padding-left: 10px; }
.status-arc { position: absolute; left: 18px; top: 22px; }
.st-count { white-space: nowrap; width: 205px; flex: none; line-height: 24px; letter-spacing: .15px; }
.st-spell { flex: none; }
.st-lang { margin-left: 22px; white-space: nowrap; line-height: 24px; }
.st-right { margin-left: auto; display: flex; align-items: center; height: 100%; flex: none; }
.st-btn { display: flex; align-items: center; gap: 6px; white-space: nowrap; height: 100%; padding-bottom: 1px; }
.st-notes { width: 80px; }
.st-comments { width: 78px; }
.st-view { width: 49px; height: 100%; background: #c6c6c6; display: flex; align-items: center; justify-content: center; }
.st-grid { width: 37px; padding-left: 16px; display: flex; align-items: center; }
.st-zoom-gap { width: 194px; }
.st-slider { flex: none; }
.st-pct { margin-left: 17px; width: 32px; white-space: nowrap; padding-bottom: 1px; }
.st-fit { margin: 0 7px 0 20px; flex: none; }
.ime { position: absolute; left: 1415px; top: 0; width: 194px; height: 28px; background: #fbfdfe; border: 1px solid #e4ebf0; display: grid; grid-template-columns: repeat(7, 26.700px); align-items: center; justify-items: center; padding-left: 1px; z-index: 1; }
.ime-zh { color: #3f8fd6; font-size: 22px; line-height: 24px; font-weight: 500; }
.ime svg { flex: none; }
```
